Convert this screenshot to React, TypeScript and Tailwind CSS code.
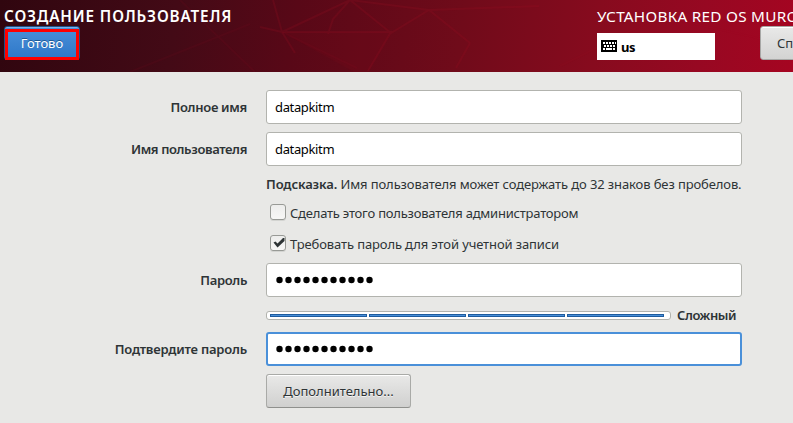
import type { ReactNode } from "react";

interface RowProps {
  label?: string;
  labelClass?: string;
  className: string;
  children: ReactNode;
}

function Row({ label, labelClass = "", className, children }: RowProps) {
  return (
    <div className={`flex gap-[19px] ${className}`}>
      <div className={`flex w-[247px] shrink-0 items-center justify-end pt-[2px] font-semibold whitespace-nowrap ${labelClass}`}>
        {label}
      </div>
      <div className="flex w-[476px] items-center whitespace-nowrap">{children}</div>
    </div>
  );
}

function Dots() {
  return (
    <svg width="100" height="8">
      {Array.from({ length: 11 }, (_, i) => (
        <circle key={i} cx={4.5 + i * 9} cy="4" r="3.2" />
      ))}
    </svg>
  );
}

const field = "flex h-[34px] w-full items-center rounded-[3px] bg-white text-black";
const textField = `${field} border border-[#b2b3ae] pt-[2px] pl-[8px] tracking-[-0.35px]`;

function Header() {
  return (
    <header className="relative flex h-[72px] justify-between overflow-hidden bg-[linear-gradient(98deg,#30060f_0%,#430a16_22%,#580817_37%,#700b1a_58%,#870b1e_75%,#970822_88%,#a50521_100%)] text-white">
      <svg className="absolute inset-0" width="793" height="72" fill="none" stroke="#a01024" strokeOpacity=".2" strokeWidth="2">
        <path d="M273 0l9 32 68-32 41 33 38-23 41 33M260 27l22 5h109l-23 39M282 32l13 21M350 0l79 10 110-4M350 0l-17 19-5 15M470 43l-14 25" />
        <path d="M282 32h109l-23 40h-14z" fill="#900a20" fillOpacity=".1" stroke="none" />
        <path d="M282 32l75 36M130 72l120-48M180 0l75 72M560 66l100-50 133 30" strokeOpacity=".08" />
      </svg>
      <div className="relative pl-[4px]">
        <h1 className="mt-[6px] h-[20px] text-[15.3px] leading-[20px] font-semibold tracking-[0.86px] whitespace-nowrap">СОЗДАНИЕ ПОЛЬЗОВАТЕЛЯ</h1>
        <button className="relative flex h-[34px] w-[76px] items-center justify-center rounded-[3px] border border-[#1c5187] bg-linear-to-b from-[#4a90d9] to-[#2d77c8] pt-[2px] text-[13px] text-white [box-shadow:inset_0_1px_#7db1e6] [text-shadow:0_-1px_#1e5a96]">
          Готово
          <span className="absolute top-[2px] left-0 h-[31px] w-[74px] border-[3px] border-[#fe0000]" />
        </button>
      </div>
      <div className="relative w-[196px]">
        <div className="mt-[6px] h-[21px] text-[15.3px] leading-[20px] tracking-[0.27px] whitespace-nowrap">УСТАНОВКА RED OS MUROM</div>
        <div className="flex">
          <div className="mt-[6px] flex h-[27px] w-[118px] shrink-0 items-center bg-white pl-[4px] text-[13px] font-bold tracking-[-0.4px] text-black">
            <svg className="mt-[-1px] mr-[4px]" width="16" height="12" shapeRendering="crispEdges">
              <rect width="16" height="12" rx="1" fill="#000" />
              <path d="M2 2h2v2H2zM5 2h2v2H5zM8 2h2v2H8zM11 2h2v2h-2zM14 2h1v2h-1zM3 5h2v2H3zM6 5h2v2H6zM9 5h2v2H9zM12 5h2v2h-2zM2 8h2v2H2zM5 8h6v2H5zM12 8h2v2h-2z" fill="#fff" />
            </svg>
            <span className="pt-[2px]">us</span>
          </div>
          <button className="mt-[-1px] ml-[45px] h-[34px] w-[100px] shrink-0 rounded-[3px] border border-[#a7a7a5] bg-linear-to-b from-[#e9e9e8] to-[#d3d3d2] pt-[2px] pl-[16px] text-left text-[13px] text-[#2e3436] [box-shadow:inset_0_1px_#fff]">
            Справка
          </button>
        </div>
      </div>
    </header>
  );
}

function StrengthBar() {
  return (
    <div className="flex h-[9px] w-[405px] items-center gap-[2px] rounded-[3px] border border-[#b2b3ae] bg-white pl-[3px]">
      {[0, 1, 2, 3].map((i) => (
        <span key={i} className="h-[3px] w-[97px] border border-[#1f5c9e] bg-[#4a90d9]" />
      ))}
    </div>
  );
}

function CheckBox({ checked = false }: { checked?: boolean }) {
  return (
    <span className="mt-[-2px] ml-[4px] flex size-[16px] items-center justify-center rounded-[3px] border border-[#989a96] bg-linear-to-b from-[#ededec] to-[#f7f7f6] [box-shadow:0_1px_#d3d4d1]">
      {checked && (
        <svg className="shrink-0" width="14" height="14">
          <path d="M2.5 6.5L4.5 5.5 6.5 7.5 12 2h1.5v3L6.5 11.5z" fill="#2e3436" />
        </svg>
      )}
    </span>
  );
}

export default function App() {
  return (
    <div className="h-[423px] w-[793px] overflow-hidden bg-[#e8e8e6] font-['Noto_Sans',sans-serif] text-[#2e3436]">
      <Header />
      <main className="pt-[18px] text-[13px]">
        <Row label="Полное имя" labelClass="tracking-[-0.3px]" className="h-[34px]">
          <div className={textField}>datapkitm</div>
        </Row>
        <Row label="Имя пользователя" labelClass="tracking-[-0.38px]" className="mt-[8px] h-[34px]">
          <div className={textField}>datapkitm</div>
        </Row>
        <Row className="mt-[8px] h-[22px]">
          <p className="tracking-[-0.11px]">
            <b className="font-semibold">Подсказка.</b> Имя пользователя может содержать до 32 знаков без пробелов.
          </p>
        </Row>
        <Row className="mt-[6px] h-[22px]">
          <CheckBox />
          <span className="ml-[4px] pt-[2px] tracking-[-0.22px]">Сделать этого пользователя администратором</span>
        </Row>
        <Row className="mt-[9px] h-[22px]">
          <CheckBox checked />
          <span className="ml-[4px] pt-[2px] tracking-[-0.12px]">Требовать пароль для этой учетной записи</span>
        </Row>
        <Row label="Пароль" labelClass="tracking-[-0.35px]" className="mt-[8px] h-[34px]">
          <div className={`${field} border border-[#b2b3ae] pl-[8px]`}><Dots /></div>
        </Row>
        <Row className="mt-[7px] h-[22px]">
          <StrengthBar />
          <span className="ml-[6px] pt-[2px] font-semibold tracking-[-0.45px]">Сложный</span>
        </Row>
        <Row label="Подтвердите пароль" labelClass="tracking-[-0.2px]" className="mt-[6px] h-[34px]">
          <div className={`${field} border-2 border-[#4a90d9] pl-[7px]`}><Dots /></div>
        </Row>
        <Row className="mt-[8px] h-[34px]">
          <button className="h-[34px] w-[145px] rounded-[3px] border border-[#a9aaa7] border-b-[#8f908d] bg-linear-to-b from-[#e9e9e8] to-[#d0d0cf] pt-[2px] [box-shadow:inset_0_1px_#fff] [text-shadow:0_1px_#f4f4f4]">
            Дополнительно...
          </button>
        </Row>
      </main>
    </div>
  );
}
